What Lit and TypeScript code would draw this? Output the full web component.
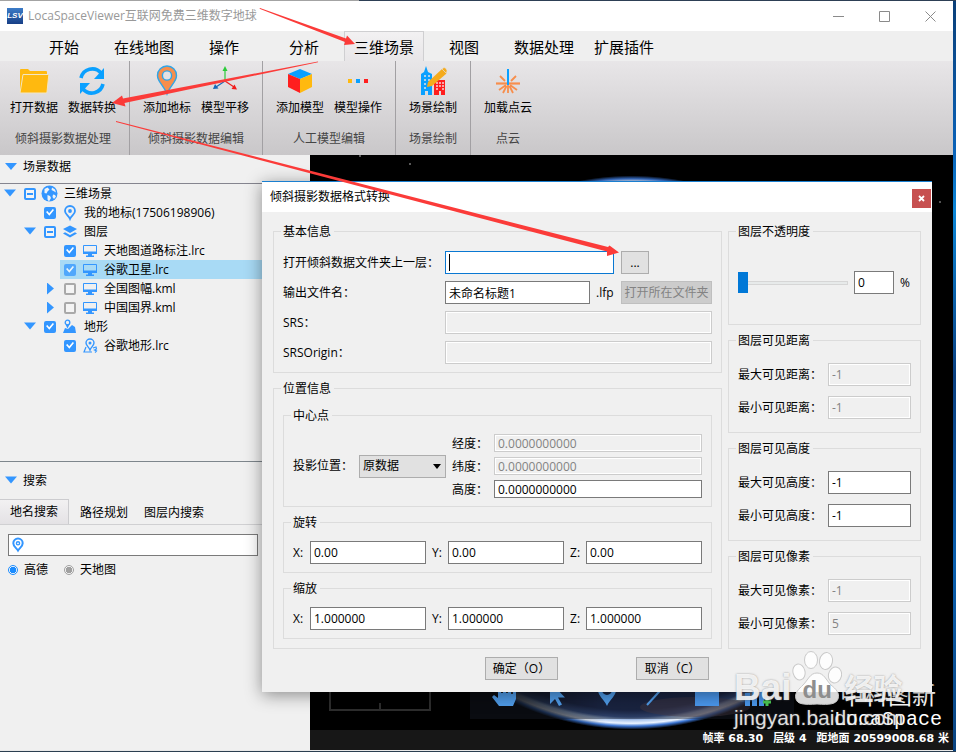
import { LitElement, html, svg, css, nothing } from "lit";
import { customElement, property } from "lit/decorators.js";
import { classMap } from "lit/directives/class-map.js";

const BLUE = "#3396ff";

const ribbonIcons: Record<string, unknown> = {
  folder: svg`<path d="M2 28V5q0-1 1-1h7l2 2h16q1 0 1 1v2H6L3 27z" fill="#ffb90f"/><path d="M5 9.500h25q.8 0 .7 1L29 27q-.1 1-1 1H3q-1 0-.8-1z" fill="#ffb90f" stroke="#f2e6c4" stroke-width="1"/>`,
  refresh: svg`<path d="M5 13A11.500 11.500 0 0 1 25 8M27 19A11.500 11.500 0 0 1 7 24" fill="none" stroke="#0aa0ff" stroke-width="3.600"/><path d="M28 3v11H18zM4 29V18h10z" fill="#0aa0ff"/>`,
  pin: svg`<path d="M16 1a9.500 9.500 0 0 0-9.500 9.500C6.500 17 12.500 20 16 29c3.500-9 9.500-12 9.500-18.500A9.500 9.500 0 0 0 16 1z" fill="#f78e4c" stroke="#2fa5e8" stroke-width="1.400"/><circle cx="16" cy="10.500" r="4.600" fill="#e3e1e3" stroke="#2fa5e8" stroke-width="1.400"/>`,
  axes: svg`<path d="M16 16V4" stroke="#2bcb3a" stroke-width="1.200"/><path d="M13.500 6L16 1l2.500 5z" fill="#2bcb3a"/><path d="M16 16L7 22" stroke="#1668b8" stroke-width="1.200"/><path d="M4 24l2-5 3.500 4.500z" fill="#1668b8"/><path d="M16 16l9 6" stroke="#f11c1c" stroke-width="1.200"/><path d="M28 24.500l-5.500-.500 3-4.500z" fill="#f11c1c"/>`,
  cube: svg`<path d="M16 4l12 5-12 5L4 9z" fill="#0aa0ff"/><path d="M4 9l12 5v14L4 22z" fill="#ff1e1e"/><path d="M28 9l-12 5v14l12-6z" fill="#ffb90f"/>`,
  dots: svg`<path d="M6 14h4v4H6z" fill="#ffb90f"/><path d="M14 14h4v4h-4z" fill="#0aa0ff"/><path d="M22 14h4v4h-4z" fill="#ff1e1e"/>`,
  city: svg`<path d="M4 30V9l3-2 2-6 2 6 4 2v21h-4v-4H8v4z" fill="#0aa0ff"/><path d="M7 11h2M11 11h2M7 15h2M11 15h2M7 19h2M11 19h2M7 23h2" stroke="#e3e1e3" stroke-width="1.600"/><path d="M17 30V15h11v15h-4v-4h-2v4z" fill="#ff1e1e"/><path d="M19 18h2M22 18h2M25 18h2M19 21h2M22 21h2M25 21h2M19 24h2M25 24h2" stroke="#f3d5d7" stroke-width="1.400"/><path d="M10 22l1-5L25 4l4.500 4.500L15 21z" fill="#f5ab1c"/><path d="M25 4l2-1.500q2 0 3 3L29.500 8.500z" fill="#f5ab1c" stroke="#e3e1e3" stroke-width=".6"/>`,
  spark: svg`<g stroke="#f78e4c" stroke-width="2.200"><path d="M4 18.500h24"/><path d="M8 11l5 5M24 11l-5 5M16 20v8M14 20l-7 5M18 20l7 5M14.500 21L11 28M17.500 21l3.500 7" stroke-width="1.800"/></g><path d="M16 4v16" stroke="#0aa0ff" stroke-width="2"/>`,
};

const treeIcons: Record<string, unknown> = {
  globe: svg`<circle cx="8.500" cy="8.500" r="8" fill="${BLUE}"/><path d="M3.500 4l3-1.500 2 2-2 2-1 2L3.500 8zM11 2.500l3 2 1 3-2.500-1.500-2-1zM6.500 10l2.500 1 1 2-2 3.500-1.500-2zM12 9.500l2 .5 1 1.500-2 2.500-1.500-2z" fill="#eef3f8"/>`,
  pin: svg`<path d="M9 2a5 5 0 0 0-5 5c0 3.500 3.500 4.500 5 8 1.500-3.500 5-4.500 5-8a5 5 0 0 0-5-5z" fill="none" stroke="${BLUE}" stroke-width="1.800"/><circle cx="9" cy="7" r="1.900" fill="${BLUE}"/>`,
  layers: svg`<path d="M9 2.500l7 3.500-7 4-7-4z" fill="${BLUE}"/><path d="M4 9.300L2 10.500l7 4 7-4-2-1.200-5 2.700z" fill="${BLUE}"/>`,
  screen: svg`<path d="M2.500 3.500h13v8h-13z" fill="none" stroke="${BLUE}"/><path d="M2 9.500h14V12H2zM7 12h4v2H7zM5 13.500h8V15H5z" fill="${BLUE}"/>`,
  terrain: svg`<path d="M2 15l2-5 3 1 4-4 3 2 1 6z" fill="${BLUE}"/><circle cx="6.500" cy="4.500" r="2.300" fill="none" stroke="${BLUE}" stroke-width="1.300"/><path d="M4.500 6.500l2 4 2-4z" fill="${BLUE}"/>`,
  place: svg`<path d="M9 2a4 4 0 0 0-4 4c0 2.500 3 4 4 7 1-3 4-4.500 4-7a4 4 0 0 0-4-4z" fill="none" stroke="${BLUE}" stroke-width="1.400"/><circle cx="9" cy="6" r="1.500" fill="${BLUE}"/><path d="M5 10l-2 5h8M12 11l3-1 .5 2-2 1 2 1-1.500 1.500" fill="none" stroke="${BLUE}" stroke-width="1.200"/>`,
};

type Check = "on" | "off" | "mixed";
interface TreeRow { level: number; arrow?: "open" | "closed"; check: Check; icon: string; text: string; selected?: boolean; }

const rows: TreeRow[] = [
  { level: 0, arrow: "open", check: "mixed", icon: "globe", text: "三维场景" },
  { level: 1, check: "on", icon: "pin", text: "我的地标(17506198906)" },
  { level: 1, arrow: "open", check: "mixed", icon: "layers", text: "图层" },
  { level: 2, check: "on", icon: "screen", text: "天地图道路标注.lrc" },
  { level: 2, check: "on", icon: "screen", text: "谷歌卫星.lrc", selected: true },
  { level: 2, arrow: "closed", check: "off", icon: "screen", text: "全国图幅.kml" },
  { level: 2, arrow: "closed", check: "off", icon: "screen", text: "中国国界.kml" },
  { level: 1, arrow: "open", check: "on", icon: "terrain", text: "地形" },
  { level: 2, check: "on", icon: "place", text: "谷歌地形.lrc" },
];

const base = css`
  :host { display: block; }
  * { box-sizing: border-box; }
  button, input, select { font: inherit; color: inherit; margin: 0; border-radius: 0; }
  svg { display: block; }
  .field {
    width: 100%; min-width: 0; height: 23px; padding: 0 3px;
    border: 1px solid #7a7a7a; background: #fff; outline: none;
  }
  .field:disabled {
    border-color: #cccccc; background: #f0f0f0; color: #838383;
    box-shadow: inset 0 0 0 1px #fff;
  }
`;

@customElement("ribbon-bar")
export class RibbonBar extends LitElement {
  static styles = [base, css`
    .tabs { display: flex; height: 30px; padding-left: 24px; background: #efefef; }
    .tab {
      width: 80px; padding: 0; border: 1px solid transparent; border-bottom: 0;
      background: none; font-size: 15px; line-height: 24px; white-space: nowrap;
    }
    .active { border-color: #cfcfd1; background: linear-gradient(#f2f1f2, #e8e6e8); }
    .ribbon { display: flex; height: 94px; background: linear-gradient(#e8e6e8, #c9c7c9); }
    .group { padding: 2px 8px 0; border-right: 1px solid #a2a0a3; text-align: center; }
    .group:first-child { padding-left: 5px; }
    .group:last-child { border-right: 0; }
    .items { display: flex; }
    .item { width: 58px; padding: 2px 0 0; border: 0; background: none; white-space: nowrap; }
    .item svg { margin: 0 auto; }
    .item span { display: block; margin-top: 2px; line-height: 18px; }
    .caption { margin-top: 13px; color: #454545; line-height: 18px; }
  `];
  tabs = ["开始", "在线地图", "操作", "分析", "三维场景", "视图", "数据处理", "扩展插件"];
  groups: [string, [string, string][]][] = [
    ["倾斜摄影数据处理", [["folder", "打开数据"], ["refresh", "数据转换"]]],
    ["倾斜摄影数据编辑", [["pin", "添加地标"], ["axes", "模型平移"]]],
    ["人工模型编辑", [["cube", "添加模型"], ["dots", "模型操作"]]],
    ["场景绘制", [["city", "场景绘制"]]],
    ["点云", [["spark", "加载点云"]]],
  ];
  render() {
    return html`
      <nav class="tabs">
        ${this.tabs.map((t) => html`<button class=${classMap({ tab: true, active: t === "三维场景" })}>${t}</button>`)}
      </nav>
      <div class="ribbon">
        ${this.groups.map(([name, items]) => html`
          <section class="group">
            <div class="items">
              ${items.map(([icon, label]) => html`
                <button class="item"><svg width="32" height="32" viewBox="0 0 32 32">${ribbonIcons[icon]}</svg><span>${label}</span></button>`)}
            </div>
            <div class="caption">${name}</div>
          </section>`)}
      </div>`;
  }
}

@customElement("side-panel")
export class SidePanel extends LitElement {
  static styles = [base, css`
    :host { display: flex; flex-direction: column; background: #f0f0f0; }
    .head { display: flex; align-items: center; gap: 6px; padding-left: 5px; height: 28px; padding-bottom: 4px; }
    .head.search { height: 37px; padding-bottom: 0; }
    .open, .closed { width: 12px; height: 12px; padding: 0; border: 0; background: #3396ff; }
    .open { clip-path: polygon(0 17%, 100% 17%, 50% 75%); }
    .closed { clip-path: polygon(25% 0, 83% 50%, 25% 100%); }
    .tree { height: 279px; margin: 0; padding: 0; list-style: none; border-top: 1px solid #85858f; border-bottom: 1px solid #7e868c; }
    .row { display: flex; height: 19px; padding-left: 4px; }
    .l1 { padding-left: 24px; }
    .l2 { padding-left: 44px; }
    .twist { display: flex; align-items: center; width: 16px; }
    .body { flex: 1; display: flex; align-items: center; padding-left: 4px; white-space: nowrap; }
    .body svg { margin: 0 5px 0 5px; }
    .selected { background: #a8daf5; }
    .selected .check { opacity: .75; }
    .check {
      appearance: none; position: relative; width: 12px; height: 12px; flex: none;
      border: 2px solid #a9a9a9; border-radius: 2px; background: #f4f4f4;
    }
    .check:checked { border-color: #3396ff; background: #3396ff; }
    .check:indeterminate { border-color: #3396ff; }
    .check:checked::after {
      content: ""; position: absolute; inset: 0; background: #fff;
      clip-path: polygon(0 45%, 18% 30%, 40% 58%, 85% 5%, 100% 20%, 42% 92%);
    }
    .check:indeterminate::after { content: ""; position: absolute; left: 1px; right: 1px; top: 3px; height: 2px; background: #3396ff; }
    .tabs { display: flex; height: 26px; border-bottom: 1px solid #d0d0d2; }
    .tab { border: 1px solid transparent; border-left: 0; border-bottom: 0; background: none; padding: 2px 4px 0 11px; line-height: 18px; }
    .tab.active { width: 69px; padding: 0 0 1px; border-color: #cccccf; background: linear-gradient(#f2f1f2, #e4e2e5); }
    .box { display: flex; align-items: center; width: 250px; height: 22px; margin: 9px 0 0 8px; border: 1px solid #7a7a7a; background: #fff; }
    .query { flex: 1; min-width: 0; border: 0; outline: 0; padding: 0 4px; background: none; }
    .radios { display: flex; gap: 16px; padding: 5px 0 0 8px; }
    .radios label { display: flex; align-items: center; gap: 6px; line-height: 18px; }
    .radio {
      appearance: none; width: 10px; height: 10px; border: 1px solid #a0a0a0; border-radius: 50%;
      background: radial-gradient(circle, #a0a0a0 0 3px, #f4f4f4 3px);
    }
    .radio:checked { border-color: #1a8cff; background: radial-gradient(circle, #1a8cff 0 3px, #f4f4f4 3px); }
  `];
  render() {
    return html`
      <div class="head"><button class="open" aria-label="折叠"></button><span>场景数据</span></div>
      <ul class="tree">
        ${rows.map((r) => html`
          <li class="row l${r.level}">
            <span class="twist">${r.arrow ? html`<button class=${r.arrow} aria-label="展开"></button>` : nothing}</span>
            <label class=${classMap({ body: true, selected: !!r.selected })}>
              <input class="check" type="checkbox" .checked=${r.check === "on"} .indeterminate=${r.check === "mixed"} />
              <svg width="18" height="18" viewBox="0 0 18 18">${treeIcons[r.icon]}</svg>
              <span>${r.text}</span>
            </label>
          </li>`)}
      </ul>
      <div class="head search"><button class="open" aria-label="折叠"></button><span>搜索</span></div>
      <div class="tabs">
        <button class="tab active">地名搜索</button>
        <button class="tab">路径规划</button>
        <button class="tab">图层内搜索</button>
      </div>
      <div class="box">
        <svg width="18" height="18" viewBox="0 0 18 18">
          <path d="M9 2.500a4.700 4.700 0 0 0-4.700 4.700C4.300 10.500 7.500 12 9 14.500c1.500-2.500 4.700-4 4.700-7.300A4.700 4.700 0 0 0 9 2.500z" fill="none" stroke="#3396ff" stroke-width="2" />
          <circle cx="9" cy="7.300" r="1.600" fill="none" stroke="#3396ff" stroke-width="1.400" />
        </svg>
        <input class="query" type="text" aria-label="搜索" />
      </div>
      <div class="radios">
        <label><input class="radio" type="radio" name="src" checked />高德</label>
        <label><input class="radio" type="radio" name="src" />天地图</label>
      </div>`;
  }
}

@customElement("globe-view")
export class GlobeView extends LitElement {
  static styles = [base, css`
    :host { position: relative; display: flex; flex-direction: column; justify-content: flex-end; background: #000; color: #fff; overflow: hidden; }
    .sky { position: absolute; inset: 0; width: 100%; height: 100%; }
    .status {
      position: relative; height: 20px; display: flex; justify-content: flex-end; gap: 10px; padding-right: 4px; background: #171717;
      font: bold 11px/18px "DejaVu Sans", "Noto Sans CJK SC", sans-serif; white-space: nowrap;
    }
    .tools {
      position: absolute; bottom: 31px; left: 50%; width: 324px; height: 54px; margin-left: -162px;
      display: flex; justify-content: center; align-items: flex-end; padding-bottom: 8px; background: rgba(22, 26, 38, .45);
    }
    .tool { width: 50px; padding: 4px 0; border: 0; background: none; }
    .tool svg { margin: 0 auto; overflow: visible; }
    .brand { position: absolute; right: 11px; bottom: 18px; text-align: right; font: 20px/24px "Liberation Mono", monospace; }
    .brand b { display: block; font: 24px/28px "Noto Sans CJK SC", sans-serif; margin-right: 6px; }
  `];
  tools = [
    svg`<path d="M5 27l-7-9 2-2 4 3V6h3v8h2V3h3v11h2V5h3v10h2V8h3v12l-3 7z" fill="#4f9be8"/>`,
    svg`<path d="M6 3v22l5-5 4 7 3-1.500-4-7h7z" fill="#4f9be8"/>`,
    svg`<path d="M13 2a9 9 0 0 0-9 9c0 6 6 9 9 16 3-7 9-10 9-16a9 9 0 0 0-9-9zm0 4a5 5 0 1 1 0 10 5 5 0 0 1 0-10z" fill="#4f9be8" fill-rule="evenodd"/>`,
    svg`<path d="M3 26L24 3" stroke="#4f9be8" stroke-width="2"/>`,
    svg`<path d="M1 3h24v24H1z" fill="#4a97ec"/>`,
    svg`<path d="M1 27V14h5v13zM8 27V8h5v19zM15 27V11h5v16z" fill="#4a97ec"/><path d="M19 23h8M23 19v8" stroke="#4ccc55" stroke-width="3"/>`,
  ];
  render() {
    return html`
      <svg class="sky">
        <defs>
          <radialGradient id="earth" cx=".5" cy=".5" r=".5">
            <stop offset="0" stop-color="#1a2445" /><stop offset=".93" stop-color="#1c2a55" />
            <stop offset=".955" stop-color="#3d5a98" /><stop offset=".965" stop-color="#a9c4ec" /><stop offset=".978" stop-color="#eaf3ff" />
            <stop offset=".988" stop-color="#3a74d2" /><stop offset="1" stop-color="#000" />
          </radialGradient>
          <linearGradient id="shade" x1="0" x2="1">
            <stop offset=".26" stop-color="#000" /><stop offset=".46" stop-color="#000" stop-opacity="0" />
            <stop offset=".62" stop-color="#000" stop-opacity="0" /><stop offset=".86" stop-color="#000" stop-opacity=".8" />
          </linearGradient>
        </defs>
        <circle cx="50%" cy="50%" r="277" fill="url(#earth)" />
        <ellipse cx="385" cy="552" rx="55" ry="10" fill="#6b5058" opacity=".45" />
        <rect width="100%" height="100%" fill="url(#shade)" />
        <g fill="#777"><circle cx="50" cy="1" r="1" /><circle cx="100" cy="9" r="1" /><circle cx="630" cy="47" r="1" /></g>
        <path d="M20 537v18h100v-18M70 548v7" fill="none" stroke="#2d2d2d" stroke-width="2" />
      </svg>
      <div class="tools">
        ${this.tools.map((t) => html`<button class="tool"><svg width="26" height="28" viewBox="0 0 26 28">${t}</svg></button>`)}
      </div>
      <div class="brand"><b>中科图新</b>LocaSpace</div>
      <div class="status"><span>帧率 68.30</span><span>层级 4</span><span>距地面 20599008.68 米</span></div>`;
  }
}

@customElement("convert-dialog")
export class ConvertDialog extends LitElement {
  static styles = [base, css`
    :host { border-top: 1px solid #1a7fd0; background: #f0f0f0; box-shadow: 0 3px 16px rgba(0, 0, 0, .42); }
    .bar { display: flex; align-items: center; height: 30px; padding: 0 1px 0 8px; background: #fff; }
    .title { flex: 1; }
    .close { width: 19px; height: 19px; padding: 0; margin-top: 3px; border: 0; background: #c75050; }
    .close svg { margin: 0 auto; }
    .main { display: grid; grid-template-columns: minmax(0, 1fr) 193px; gap: 8px 6px; padding: 10px 11px 12px; }
    .col { display: flex; flex-direction: column; gap: 6px; }
    fieldset { margin: 0; min-width: 0; border: 1px solid #dcdcdc; padding: 11px 9px 8px; }
    legend { margin: 0 0 0 -2px; padding: 0 3px 0 2px; height: 18px; line-height: 20px; }
    .info { display: grid; grid-template-columns: 155px minmax(0, 1fr) 91px; gap: 7px; align-items: center; }
    .info > label { grid-column: 1; white-space: nowrap; }
    .wide { grid-column: 2 / 4; }
    .caret { position: relative; }
    .caret .field { display: block; border-color: #0a78d2; }
    .caret::after { content: ""; position: absolute; left: 4px; top: 3px; width: 1px; height: 17px; background: #000; }
    .name { display: flex; align-items: center; gap: 6px; }
    .name span { width: 18px; }
    .name .field { flex: 1; }
    .btn { height: 23px; padding: 0; border: 1px solid #adadad; background: #e1e1e1; white-space: nowrap; line-height: 18px; }
    .btn:disabled { border-color: #bfbfbf; background: #cccccc; color: #838383; }
    .dots { width: 28px; }
    .ok { width: 73px; }
    .outer { display: flex; flex-direction: column; gap: 6px; padding: 9px; }
    .center { display: grid; grid-template-columns: 60px 87px 36px minmax(0, 1fr); gap: 5px 6px; padding-top: 10px; align-items: center; }
    .center .c3 { grid-column: 3; height: 18px; line-height: 20px; white-space: nowrap; }
    .center .field { height: 18px; grid-column: 4; line-height: 16px; }
    .first { grid-column: 1; grid-row: 1 / 4; white-space: nowrap; }
    .pick { grid-column: 2; grid-row: 1 / 4; position: relative; }
    .pick select { display: block; appearance: none; width: 100%; height: 23px; padding: 0 3px; border: 1px solid #adadad; background: #e1e1e1; }
    .pick::after { content: ""; position: absolute; right: 5px; top: 9px; border: 4px solid transparent; border-top: 5px solid #000; border-bottom: 0; pointer-events: none; }
    .xyz { display: grid; grid-template-columns: 17px minmax(0, 1fr) 22px minmax(0, 1fr) 22px minmax(0, 1fr); align-items: center; padding-top: 10px; }
    .xyz label { padding-left: 6px; }
    .xyz label:first-of-type { padding-left: 0; }
    .range { display: grid; grid-template-columns: 90px minmax(0, 1fr); gap: 10px 0; align-items: center; padding: 14px 9px 13px; white-space: nowrap; }
    .alpha { display: grid; grid-template-columns: minmax(0, 1fr) 40px 11px; gap: 6px; align-items: center; padding: 31px 9px 30px; }
    .slider { appearance: none; width: 100%; height: 21px; background: none; }
    .slider::-webkit-slider-runnable-track { height: 4px; border: 1px solid #d6d6d6; background: #e7eaea; }
    .slider::-webkit-slider-thumb { appearance: none; width: 10px; height: 21px; margin: -10px 0 0 -1px; background: #0078d7; }
    .actions { display: flex; justify-content: flex-end; gap: 78px; padding-right: 13px; }
  `];
  xyz(name: string, id: string, v: string) {
    return html`<fieldset class="xyz"><legend>${name}</legend>
      ${["X", "Y", "Z"].map((a) => html`<label for="${id}${a}">${a}:</label><input class="field" id="${id}${a}" type="text" .value=${v} />`)}
    </fieldset>`;
  }
  range(kind: string, id: string, max: string, min: string, off: boolean) {
    return html`<fieldset class="range"><legend>图层可见${kind}</legend>
      <label for="${id}1">最大可见${kind}：</label><input class="field" id="${id}1" type="text" .value=${max} ?disabled=${off} />
      <label for="${id}2">最小可见${kind}：</label><input class="field" id="${id}2" type="text" .value=${min} ?disabled=${off} />
    </fieldset>`;
  }
  render() {
    return html`
      <header class="bar"><span class="title">倾斜摄影数据格式转换</span>
        <button class="close" aria-label="关闭"><svg width="7" height="7" viewBox="0 0 7 7"><path d="M1 1l5 5M6 1L1 6" stroke="#fff" stroke-width="1.800" /></svg></button>
      </header>
      <form class="main" @submit=${(e: Event) => e.preventDefault()}>
        <div class="col">
          <fieldset class="info"><legend>基本信息</legend>
            <label for="dir">打开倾斜数据文件夹上一层：</label>
            <div class="caret"><input class="field" id="dir" type="text" /></div>
            <button type="button" class="btn dots">...</button>
            <label for="out">输出文件名：</label>
            <div class="name"><input class="field" id="out" type="text" .value=${"未命名标题1"} /><span>.lfp</span></div>
            <button type="button" class="btn" disabled>打开所在文件夹</button>
            <label for="srs">SRS：</label><input class="field wide" id="srs" type="text" disabled />
            <label for="org">SRSOrigin：</label><input class="field wide" id="org" type="text" disabled />
          </fieldset>
          <fieldset class="outer"><legend>位置信息</legend>
            <fieldset class="center"><legend>中心点</legend>
              <label class="first" for="proj">投影位置：</label>
              <div class="pick"><select id="proj"><option>原数据</option></select></div>
              <label class="c3" for="lon">经度：</label><input class="field" id="lon" type="text" .value=${"0.0000000000"} disabled />
              <label class="c3" for="lat">纬度：</label><input class="field" id="lat" type="text" .value=${"0.0000000000"} disabled />
              <label class="c3" for="alt">高度：</label><input class="field" id="alt" type="text" .value=${"0.0000000000"} />
            </fieldset>
            ${this.xyz("旋转", "r", "0.00")}
            ${this.xyz("缩放", "s", "1.000000")}
          </fieldset>
        </div>
        <div class="col">
          <fieldset class="alpha"><legend>图层不透明度</legend>
            <input class="slider" type="range" min="0" max="100" .value=${"0"} aria-label="图层不透明度" />
            <input class="field" id="pct" type="text" .value=${"0"} /><label for="pct">%</label>
          </fieldset>
          ${this.range("距离", "d", "-1", "-1", true)}
          ${this.range("高度", "h", "-1", "-1", false)}
          ${this.range("像素", "p", "-1", "5", true)}
        </div>
        <div class="actions">
          <button type="button" class="btn ok">确定（O）</button>
          <button type="button" class="btn ok">取消（C）</button>
        </div>
      </form>`;
  }
}

@customElement("app-root")
export class AppRoot extends LitElement {
  @property() name = "LocaSpaceViewer互联网免费三维数字地球";
  static styles = [base, css`
    :host {
      position: relative; display: flex; flex-direction: column; box-sizing: border-box; min-height: 100vh; padding: 1px 3px 1px 0; color: #000;
      background: linear-gradient(90deg, #a3a3a3 359px, #2d3f55 359px) top / 100% 1px no-repeat,
        linear-gradient(#2b3e50, #2b3e50) bottom / 100% 1px no-repeat,
        linear-gradient(#0b3f78, #0a62b8 20%, #0c86d6 28%, #0a3f80 50%, #0a5fae 75%, #0b4480);
      font: 12px/18px "Open Sans", "Noto Sans CJK SC", sans-serif;
    }
    .caption { display: flex; align-items: center; height: 30px; padding-left: 7px; background: #fff; color: #999; }
    .logo {
      width: 16px; height: 16px; margin-right: 5px; background: linear-gradient(#3c7cc8, #173f86); color: #fff;
      font: italic bold 8px/16px "Liberation Sans", sans-serif; text-align: center;
    }
    .name { flex: 1; }
    .ctl { width: 46px; height: 30px; padding: 0; border: 0; background: none; }
    .ctl svg { margin: 0 auto; }
    .work { position: relative; flex: 1; display: flex; min-height: 595px; border-bottom: 1px solid #e8e8e8; }
    side-panel { width: 310px; }
    globe-view { flex: 1; }
    convert-dialog { position: absolute; left: 262px; right: 21px; top: 26px; }
    .mark { position: absolute; right: 49px; bottom: 20px; width: 170px; color: rgba(255, 255, 255, .85); text-shadow: 0 0 2px rgba(110, 110, 110, .7); pointer-events: none; }
    .mark .top { display: flex; align-items: flex-end; font: bold 37px/37px "Liberation Sans", sans-serif; }
    .mark .cn { font: bold 29px/38px "Noto Sans CJK SC", sans-serif; margin-left: 3px; white-space: nowrap; }
    .paw { position: relative; width: 50px; height: 56px; flex: none; }
    .paw span { position: absolute; left: 11px; bottom: 4px; font: bold 24px/24px "Liberation Sans", sans-serif; color: #8e8e8e; text-shadow: none; }
    .url { font: 21px/24px "Liberation Sans", sans-serif; }
    .arrows { position: absolute; inset: 0; width: 100%; height: 100%; pointer-events: none; }
  `];
  render() {
    return html`
      <header class="caption">
        <span class="logo">LSV</span><span class="name">${this.name}</span>
        <button class="ctl" aria-label="最小化"><svg width="11" height="11"><path d="M0 5.500h11" stroke="#8a8a8a" /></svg></button>
        <button class="ctl" aria-label="最大化"><svg width="11" height="11"><path d="M.5.500h10v10H.5z" fill="none" stroke="#8a8a8a" /></svg></button>
        <button class="ctl" aria-label="关闭"><svg width="11" height="11"><path d="M.5.500l10 10M10.500.500l-10 10" stroke="#8a8a8a" /></svg></button>
      </header>
      <ribbon-bar></ribbon-bar>
      <main class="work">
        <side-panel></side-panel>
        <globe-view></globe-view>
        <convert-dialog></convert-dialog>
        <div class="mark">
          <div class="top"><span>Bai</span>
            <span class="paw"><svg width="50" height="56" viewBox="0 0 50 56">
              <g fill="#fff" fill-opacity=".85" stroke="#c9c9c9" stroke-width="1">
                <ellipse cx="19" cy="10" rx="6.500" ry="8.500" /><ellipse cx="34" cy="11" rx="6.500" ry="8.500" transform="rotate(10 34 11)" />
                <ellipse cx="7" cy="22" rx="6" ry="8" transform="rotate(-14 7 22)" /><ellipse cx="43" cy="25" rx="6.500" ry="8" transform="rotate(14 43 25)" />
                <path d="M25 23c7 0 9 7 14 12 5 4 9 8 7 14-2 5-8 6-21 5-13 1-20 0-21-5-2-6 3-10 7-14 5-5 7-12 14-12z" />
              </g></svg><span>du</span></span>
            <span class="cn">经验</span></div>
          <div class="url">jingyan.baidu.com</div>
        </div>
      </main>
      <svg class="arrows" fill="#fb3b39">
        <path d="M260 8L346 38.500 347 35.500 355 44 344 45 345 42 259.500 8.800z" />
        <path d="M318 61.500L123 98.500 122 95.500 112 103 125.500 106.500 124.500 103 318 62.300z" />
        <path d="M116 121L608 247 609.500 245.500 619 252.500 607 256 607 251.500 116 122z" />
      </svg>`;
  }
}
